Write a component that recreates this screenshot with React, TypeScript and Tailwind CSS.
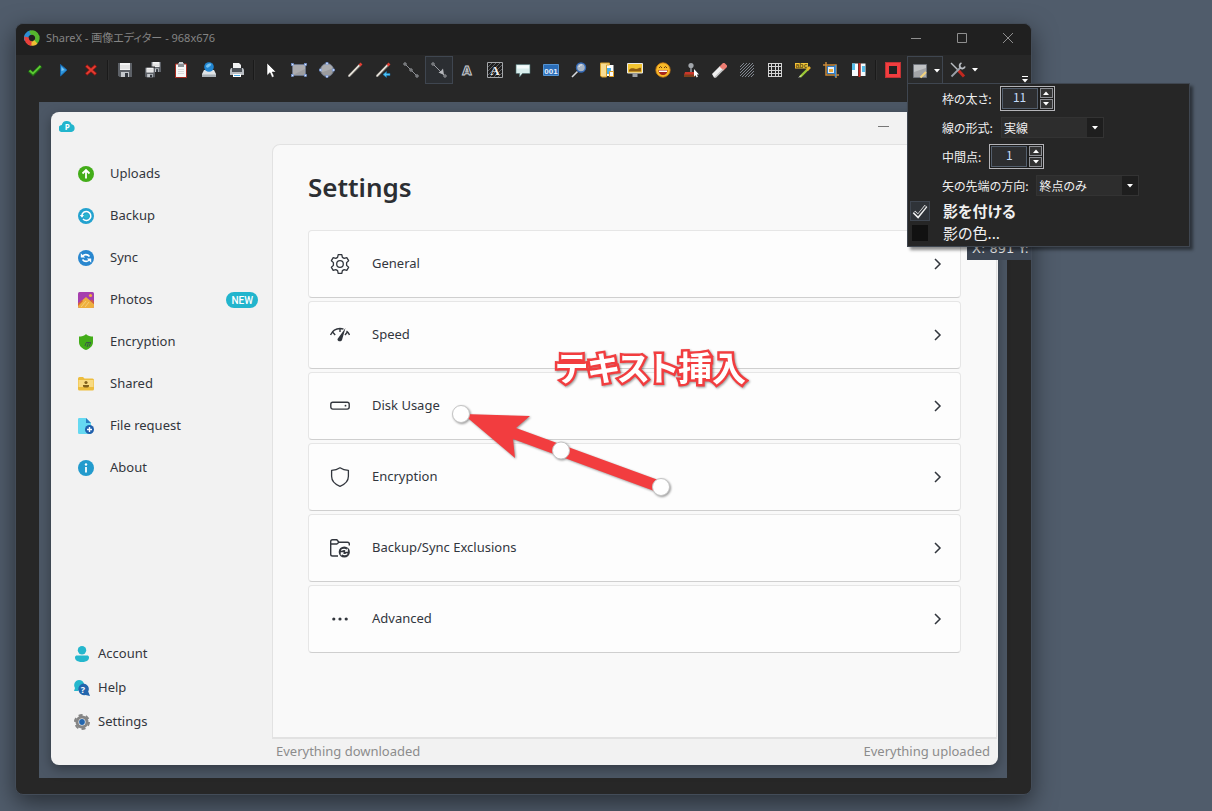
import { useState } from "react";
import type { ReactNode } from "react";

interface Tool {
  label: string;
  icon: ReactNode;
  active?: boolean;
}

function Icon({ children, size = 16, box = 16 }: { children: ReactNode; size?: number; box?: number }) {
  return (
    <svg width={size} height={size} viewBox={`0 0 ${box} ${box}`} fill="none" className="shrink-0" aria-hidden="true">
      {children}
    </svg>
  );
}

function Floppy({ x = 0, y = 0, s = 14 }: { x?: number; y?: number; s?: number }) {
  return (
    <svg x={x} y={y} width={s} height={s} viewBox="0 0 14 14">
      <path d="M0 0h14v14H1.500L0 12.500z" fill="#5d6167" />
      <path d="M2 0h10v7H2z" fill="#f4f4f4" />
      <path d="M2 3h10M2 5h10" stroke="#d2d2d2" />
      <path d="M3 9h8v5H3z" fill="#c4c8cc" />
      <path d="M7 10h3v4H7z" fill="#33383f" />
    </svg>
  );
}

const actionTools: Tool[] = [
  { label: "Apply", icon: <Icon><path d="M2 8.500l4 3.500 8-8" stroke="#1f6a14" strokeWidth="3.600" /><path d="M2.500 8.500L6 11.500 13.500 4" stroke="#5cc832" strokeWidth="1.800" /></Icon> },
  { label: "Continue", icon: <Icon><path d="M5.500 2.500L12 8l-6.500 6z" fill="#2f97dd" stroke="#1665a8" /><path d="M6.500 5l3 3-3 1z" fill="#7fc8f4" /></Icon> },
  { label: "Cancel", icon: <Icon><path d="M3 3.500l10 9M13 3.500l-10 9" stroke="#8d1713" strokeWidth="3.400" /><path d="M3.500 4l9 8M12.500 4l-9 8" stroke="#e43c31" strokeWidth="1.800" /></Icon> },
];

const fileTools: Tool[] = [
  { label: "Save", icon: <Icon><Floppy x={1} y={1} /></Icon> },
  { label: "Save as", icon: <Icon><Floppy x={6} y={0} s={10} /><path d="M-1 4.500h11v12H-1z" fill="#272727" /><Floppy x={0} y={5.500} s={10} /></Icon> },
  {
    label: "Copy",
    icon: (
      <Icon>
        <path d="M2.500 2h11v13.500h-11z" fill="#f7f7f7" stroke="#a62a20" />
        <path d="M5 1h6v4H5z" fill="#8b9095" />
        <path d="M6 0h4v2H6z" fill="#c9ced2" />
        <path d="M5 7.500h6M5 9.500h6M5 11.500h6" stroke="#d9d9d9" />
      </Icon>
    ),
  },
  {
    label: "Upload",
    icon: (
      <Icon>
        <path d="M3 8h10l2 4v3H1v-3z" fill="#dfe3e6" />
        <path d="M1 12.500h14V15H1z" fill="#a9b0b6" />
        <circle cx="8" cy="5" r="4.800" fill="#2186d2" />
        <path d="M5 4c1-2 4-3 5-2s-1 2-2 3-3 1-3-1z" fill="#76c3f1" />
      </Icon>
    ),
  },
  {
    label: "Print",
    icon: (
      <Icon>
        <path d="M4 1h6l2 2v4H4z" fill="#f2f2f2" />
        <path d="M2 6h12l1 2v5H1V8z" fill="#b9bdc2" />
        <path d="M3 6h10v4H3z" fill="#4b5056" />
        <path d="M4 12h8v3H4z" fill="#fff" />
        <path d="M5 13.500h6" stroke="#49a9e4" />
      </Icon>
    ),
  },
];

const dot = "#6f94d9";

const drawTools: Tool[] = [
  { label: "Select", icon: <Icon><path d="M4 1v12.500l3-2.800L9 15.500l2.200-1-2-4.500H13z" fill="#fff" stroke="#111" strokeWidth=".5" /></Icon> },
  {
    label: "Rectangle",
    icon: (
      <Icon>
        <path d="M1.500 2.500h13v11h-13z" fill="#9c9da0" stroke="#6a7385" />
        <path d="M2 13l12-6V3H2z" fill="#b9babc" opacity=".5" />
        {[[1.500, 2.500], [14.500, 2.500], [1.500, 13.500], [14.500, 13.500]].map(([x, y]) => (
          <rect key={`${x}-${y}`} x={x - 1} y={y - 1} width="2" height="2" fill="#dde6ff" stroke={dot} strokeWidth=".6" />
        ))}
      </Icon>
    ),
  },
  {
    label: "Ellipse",
    icon: (
      <Icon>
        <circle cx="8" cy="8" r="6.500" fill="#9a9b9e" stroke="#6a7385" />
        <path d="M2 10c3 0 8-2 12-4-1-2-3-4-6-4-4 0-7 4-6 8z" fill="#bcbdbf" opacity=".5" />
        {[[8, 1.500], [8, 14.500], [1.500, 8], [14.500, 8]].map(([x, y]) => (
          <rect key={`${x}-${y}`} x={x - 1} y={y - 1} width="2" height="2" fill="#dde6ff" stroke={dot} strokeWidth=".6" />
        ))}
      </Icon>
    ),
  },
  { label: "Freehand", icon: <Icon><path d="M2 14L13 3" stroke="#77736c" strokeWidth="2.600" /><path d="M1.500 14.500L12.500 3" stroke="#eeebe4" strokeWidth="1.500" /><path d="M12.500 3.500l2-2" stroke="#e23f34" strokeWidth="2.600" /></Icon> },
  {
    label: "Freehand arrow",
    icon: (
      <Icon>
        <path d="M2 14L13 3" stroke="#77736c" strokeWidth="2.600" />
        <path d="M1.500 14.500L12.500 3" stroke="#eeebe4" strokeWidth="1.500" />
        <path d="M12.500 3.500l2-2" stroke="#e23f34" strokeWidth="2.600" />
        <path d="M8 12.500l3.500-3v2H15v2h-3.500v2z" fill="#4cc3f5" stroke="#1679b8" strokeWidth=".5" />
      </Icon>
    ),
  },
  {
    label: "Line",
    icon: (
      <Icon>
        <path d="M1.500 1.500l13 13" stroke="#8d9096" />
        {[2, 8, 14].map((p) => <circle key={p} cx={p} cy={p} r="1.200" fill="#2b2b2b" stroke="#a0a3a8" />)}
      </Icon>
    ),
  },
  {
    label: "Arrow",
    active: true,
    icon: (
      <Icon>
        <path d="M2 2l11 11" stroke="#9a9da3" />
        <path d="M13 13l-1-6.500-2 2.500-2.500 1.500z" fill="#b5b7bb" />
        <circle cx="2" cy="2" r="1.200" fill="#2b2b2b" stroke="#a0a3a8" />
        <circle cx="14" cy="14" r="1.200" fill="#2b2b2b" stroke="#a0a3a8" />
      </Icon>
    ),
  },
  {
    label: "Text (outline)",
    icon: (
      <Icon>
        <text x="8" y="12.500" textAnchor="middle" fontFamily="DejaVu Sans" fontWeight="bold" fontSize="12" fill="#2f3338" stroke="#c9ccd1" strokeWidth="1">A</text>
      </Icon>
    ),
  },
  {
    label: "Text (background)",
    icon: (
      <Icon>
        <path d="M.5.500h15v15H.5z" fill="#1d1d1d" stroke="#a5a7aa" />
        <path d="M1 5l4-4M1 9l8-8M1 13l12-12M3 15L15 3M7 15l8-8M11 15l4-4" stroke="#5f6266" />
        <text x="8" y="12.500" textAnchor="middle" fontFamily="Liberation Serif" fontWeight="bold" fontSize="13" fill="#f2f2f2">A</text>
      </Icon>
    ),
  },
  { label: "Speech balloon", icon: <Icon><path d="M1 2.500h14v9H7.500L4.500 15v-3.500H1z" fill="#d9eeed" stroke="#4d6f70" strokeWidth=".6" /><path d="M2 3.500h12v3H2z" fill="#f4fbfb" /></Icon> },
  {
    label: "Step",
    icon: (
      <Icon>
        <path d="M.5 2.500h15v11H.5z" fill="#2a6db8" stroke="#5493d2" />
        <text x="8" y="11.500" textAnchor="middle" fontFamily="Liberation Sans" fontWeight="bold" fontSize="8" fill="#e5f0fb">001</text>
      </Icon>
    ),
  },
  { label: "Magnify", icon: <Icon><path d="M1 15l5.500-5.500" stroke="#d6d9dd" strokeWidth="1.600" /><circle cx="10" cy="5.500" r="4.500" fill="#a9b4c2" stroke="#3268b5" strokeWidth="1.400" /><path d="M8 5c0-1.500 2-2.500 3-2" stroke="#e8eef5" /></Icon> },
  {
    label: "Image from file",
    icon: (
      <Icon>
        <path d="M6 3h8.500v11H6z" fill="#fdfdfd" />
        <path d="M8 6h4v6H8z" fill="#49aee6" />
        <path d="M10.500 9.500h4v5h-4z" fill="#fff" stroke="#e3a329" />
        <path d="M1.500 1h9v2h-3v12H3l-1.500-1z" fill="#f7dc92" stroke="#d79e27" />
      </Icon>
    ),
  },
  {
    label: "Image from screen",
    icon: (
      <Icon>
        <path d="M.5 1.500h15v9.500H.5z" fill="#f3c431" stroke="#e7e7e7" />
        <path d="M2 8c3-3 5-1 7-1s3-2 5-1v3.500H2z" fill="#8d5b14" />
        <path d="M5.500 11.500h5V15h-5z" fill="#9da1a6" />
      </Icon>
    ),
  },
  {
    label: "Sticker",
    icon: (
      <Icon>
        <circle cx="8" cy="8" r="7.200" fill="#f8ba28" stroke="#c97913" strokeWidth=".8" />
        <path d="M3.500 8h9c0 3.500-2 5-4.500 5S3.500 11.500 3.500 8z" fill="#a7261d" />
        <path d="M4 8.500h8v1.500H4z" fill="#fff" />
        <path d="M4 6l1.500-1.500L7 6M9 6l1.500-1.500L12 6" stroke="#6c3a0c" />
      </Icon>
    ),
  },
  {
    label: "Cursor stamp",
    icon: (
      <Icon>
        <circle cx="8" cy="3.500" r="2.600" fill="#a2a6ab" />
        <path d="M8 6v5" stroke="#8c9095" strokeWidth="1.600" />
        <path d="M2 10h9l1 3H1z" fill="#c9362a" />
        <path d="M1 12.500h11V15H1z" fill="#7d3f1b" />
        <path d="M11 7v7.500l1.600-1.300 1 2.300 1.300-.7-1-2.300H16z" fill="#fff" />
      </Icon>
    ),
  },
  { label: "Smart eraser", icon: <Icon><path d="M1 12l8-8 4 3.500-8 8H3z" fill="#efefef" /><path d="M8.500 4.500L12 1h1.500L16 3.500V5l-3.500 3.500z" fill="#ee7d72" /><path d="M3 15.500h2l8-8-1-1-7.500 7.500z" fill="#bdbdbd" /></Icon> },
  {
    label: "Blur",
    icon: (
      <Icon>
        <path d="M1 5l4-4M1 8l7-7M1 11l10-10M1 14L14 1M3 15L15 3M6 15l9-9M9 15l6-6M12 15l3-3" stroke="#8b929c" strokeWidth=".9" />
      </Icon>
    ),
  },
  { label: "Pixelate", icon: <Icon><path d="M1.500 1.500h13v13h-13zM4.500 1v14M8 1v14M11.500 1v14M1 4.500h14M1 8h14M1 11.500h14" stroke="#d4d4d4" shapeRendering="crispEdges" /></Icon> },
  {
    label: "Highlight",
    icon: (
      <Icon>
        <path d="M0 1h13v5.500H0z" fill="#f3c83c" />
        <text x="6.500" y="6" textAnchor="middle" fontFamily="Liberation Sans" fontWeight="bold" fontSize="7" fill="#6b5110">abc</text>
        <path d="M5 15l8-8" stroke="#9cc936" strokeWidth="2.400" />
        <path d="M12 8l3-3" stroke="#e8b32d" strokeWidth="2.600" />
        <path d="M4 15.500l2-2" stroke="#f0f0f0" />
      </Icon>
    ),
  },
  {
    label: "Crop",
    icon: (
      <Icon>
        <path d="M4.500 4.500h7v7h-7z" fill="#e4f1fc" stroke="#2e79c3" />
        <path d="M6 7h4v3H6z" fill="#e9a93b" />
        <path d="M3 0v13h13M0 3h13v13" stroke="#c98a3a" strokeWidth="1.500" />
        <path d="M12.500 3v12" stroke="#3b8dd6" strokeWidth="1.500" />
      </Icon>
    ),
  },
  {
    label: "Cut out",
    icon: (
      <Icon>
        <path d="M1 1.500h6V14H1zM9.500 1.500h5V14h-5z" fill="#f4fafd" />
        <path d="M1 1.500h3V8H1zM11 4h3v6h-3z" fill="#54bce9" />
        <path d="M8.500 1v14" stroke="#c5271f" strokeWidth="2" />
      </Icon>
    ),
  },
];

const nav = [
  { label: "Uploads", icon: <Icon><circle cx="8" cy="8" r="8" fill="#43ad19" /><path d="M8 12.500V4M4.500 7.500L8 4l3.500 3.500" stroke="#fff" strokeWidth="1.800" /></Icon> },
  {
    label: "Backup",
    icon: (
      <Icon>
        <circle cx="8" cy="8" r="8" fill="#23a2cf" />
        <path d="M3.800 7.500A4.500 4.500 0 1 1 5 11" stroke="#fff" strokeWidth="1.500" />
        <path d="M1.800 7h4.400L4 9.800z" fill="#fff" />
        <circle cx="8.300" cy="8" r="2.500" fill="#2cb5cd" />
      </Icon>
    ),
  },
  {
    label: "Sync",
    icon: (
      <Icon>
        <circle cx="8" cy="8" r="8" fill="#2987cf" />
        <path d="M5 6c.8-1.600 4.500-2.200 6.500.5M11 10c-.8 1.600-4.500 2.200-6.500-.5" stroke="#fff" strokeWidth="1.600" />
        <path d="M2.800 3.300v4.200h4.400zM13.200 12.700V8.500H8.800z" fill="#fff" />
      </Icon>
    ),
  },
  {
    label: "Photos",
    badge: "NEW",
    icon: (
      <Icon>
        <rect width="16" height="16" rx="1.500" fill="#a63fae" />
        <circle cx="12.500" cy="3.500" r="1.600" fill="#f3b33c" />
        <path d="M0 12l8-7 8 7v2.500a1.500 1.500 0 0 1-1.500 1.500h-13A1.500 1.500 0 0 1 0 14.500z" fill="#eeb03f" />
        <path d="M0 11.500L4 8l1 1-5 5zM12 8.500l4 3.500v-2l-2-2.500z" fill="#d6603c" />
        <path d="M3 15l5-6M7 15l4-5" stroke="#f7cf76" />
      </Icon>
    ),
  },
  {
    label: "Encryption",
    icon: (
      <Icon>
        <path d="M8 0l1 1c2 1.200 4 1.500 6 1.500V8c0 4-3 6.500-7 8-4-1.500-7-4-7-8V2.500C3 2.500 5 2.200 7 1z" fill="#43ad19" />
        <path d="M7 12l1-3M9 13l1.500-4.500M11 12.500l1.500-3.500M8 8.500h5" stroke="#3c5a49" />
      </Icon>
    ),
  },
  {
    label: "Shared",
    icon: (
      <Icon>
        <path d="M0 2.500A1.500 1.500 0 0 1 1.500 1H5l1.500 1.500h8A1.500 1.500 0 0 1 16 4v9a1.500 1.500 0 0 1-1.500 1.500h-13A1.500 1.500 0 0 1 0 13z" fill="#edbd3e" />
        <path d="M.5 4h15v7H.5z" fill="#f8da82" />
        <circle cx="8" cy="6.500" r="1.600" fill="#80601b" />
        <path d="M5 9h6v1c0 1-1 1.500-3 1.500S5 11 5 10z" fill="#80601b" />
      </Icon>
    ),
  },
  {
    label: "File request",
    icon: (
      <Icon>
        <path d="M0 1.200A1.200 1.200 0 0 1 1.200 0H8l5 5v11H1.200A1.200 1.200 0 0 1 0 14.800z" fill="#66d9f1" />
        <path d="M8 0l5 5H8z" fill="#2a7fc0" />
        <circle cx="11.500" cy="11.500" r="4.500" fill="#1f5fac" />
        <path d="M11.500 9v5M9 11.500h5" stroke="#fff" strokeWidth="1.400" />
      </Icon>
    ),
  },
  {
    label: "About",
    icon: (
      <Icon>
        <circle cx="8" cy="8" r="8" fill="#239bcd" />
        <path d="M8 7v5.500" stroke="#fff" strokeWidth="1.800" />
        <circle cx="8" cy="4.500" r="1.200" fill="#fff" />
      </Icon>
    ),
  },
];

const footerNav = [
  { label: "Account", icon: <Icon><circle cx="8" cy="4.200" r="4.200" fill="#25b7cd" /><path d="M1 11.500c0-1.500 1-2 2-2h10c1 0 2 .5 2 2 0 3-3 4.500-7 4.500s-7-1.500-7-4.500z" fill="#25b7cd" /></Icon> },
  {
    label: "Help",
    icon: (
      <Icon>
        <path d="M5 0a5.200 5.200 0 0 1 5 4L4 11H0l1-3a5.200 5.200 0 0 1 4-8z" fill="#25b7cd" />
        <path d="M9 3.500a5.500 5.500 0 0 1 5.200 8L16 16l-4.500-1A5.700 5.700 0 1 1 9 3.500z" fill="#2366ae" />
        <text x="9" y="12.500" textAnchor="middle" fontFamily="Open Sans" fontWeight="bold" fontSize="9" fill="#fff">?</text>
      </Icon>
    ),
  },
  {
    label: "Settings",
    icon: (
      <Icon>
        <circle cx="8" cy="8" r="5" fill="#fff" stroke="#858585" strokeWidth="3" />
        <circle cx="8" cy="8" r="7" stroke="#858585" strokeWidth="2" strokeDasharray="4 3.330" />
        <circle cx="8" cy="8" r="2.900" fill="#2366ae" />
      </Icon>
    ),
  },
];

const ink = "#32363d";

const settings = [
  {
    label: "General",
    icon: (
      <Icon size={20} box={20}>
        <path
          d="M8.200.700h3.600l.6 2.700 1.800 1 2.600-.8 1.800 3.100-2 1.900v2.800l2 1.900-1.800 3.100-2.600-.8-1.800 1-.6 2.700H8.200l-.6-2.700-1.800-1-2.600.8-1.800-3.100 2-1.900V8.600l-2-1.900 1.800-3.100 2.600.8 1.800-1z"
          stroke={ink}
          strokeWidth="1.300"
          strokeLinejoin="round"
        />
        <circle cx="10" cy="10" r="3.300" stroke={ink} strokeWidth="1.300" />
      </Icon>
    ),
  },
  {
    label: "Speed",
    icon: (
      <Icon size={20} box={20}>
        <path d="M.5 10C2.500 5.500 6 3.500 10 3.500c1.300 0 2.500.2 3.500.6M16.500 6c1.200.9 2.300 2.200 3 4M3 7.500l2.200 2.500M10 3.500v3.500M17 7.500L15 10" stroke={ink} strokeWidth="1.400" />
        <path d="M15.500 3L12 15c-.6 2.200-5 1.600-4.500-1z" fill={ink} />
      </Icon>
    ),
  },
  { label: "Disk Usage", icon: <Icon size={20} box={20}><rect x=".8" y="6.300" width="18.400" height="6.800" rx="2" stroke={ink} strokeWidth="1.400" /><circle cx="15.500" cy="9.700" r=".9" fill={ink} /></Icon> },
  { label: "Encryption", icon: <Icon size={20} box={20}><path d="M10 .800c2.500 1.800 5.300 2.500 8.400 2.500v6c0 5-3.300 8-8.400 10-5.100-2-8.400-5-8.400-10v-6C4.700 3.300 7.500 2.600 10 .800z" stroke={ink} strokeWidth="1.300" strokeLinejoin="round" /></Icon> },
  {
    label: "Backup/Sync Exclusions",
    icon: (
      <Icon size={20} box={20}>
        <path d="M8 18H2.500A1.800 1.800 0 0 1 .7 16.200V3.500c0-1 .8-1.800 1.800-1.800h4.300l2.200 2.600h8.500c1 0 1.800.8 1.800 1.800v1.500M.7 6h6.100L9 4.300" stroke={ink} strokeWidth="1.400" />
        <circle cx="14.300" cy="14" r="5.600" fill={ink} />
        <path d="M11.300 12.500c1.500-1.500 4.500-1.500 5.500.3M17.300 15.500c-1.500 1.500-4.500 1.500-5.500-.3M17.300 10.800v2.300h-2.300M11.300 17.200v-2.300h2.300" stroke="#fff" strokeWidth="1.100" />
      </Icon>
    ),
  },
  { label: "Advanced", icon: <Icon size={20} box={20}><circle cx="3.800" cy="10" r="1.600" fill={ink} /><circle cx="10" cy="10" r="1.600" fill={ink} /><circle cx="16.200" cy="10" r="1.600" fill={ink} /></Icon> },
];

function ToolButton({ tool }: { tool: Tool }) {
  return (
    <button
      aria-label={tool.label}
      className={`flex size-7 items-center justify-center border ${
        tool.active ? "border-[#3f4650] bg-[#2b2e32]" : "border-transparent"
      }`}
    >
      {tool.icon}
    </button>
  );
}

function Separator() {
  return <span className="mx-[2px] h-5 w-[2px] border-l border-[#1a1a1a] bg-[#303030]" />;
}

function Caret({ up = false }: { up?: boolean }) {
  return (
    <svg width="6" height="4" viewBox="0 0 6 4" aria-hidden="true">
      <path d={up ? "M0 4h6L3 .500z" : "M0 0h6L3 3.500z"} fill="#fff" />
    </svg>
  );
}

function Stepper({ id, label, initial }: { id: string; label: string; initial: number }) {
  const [value, setValue] = useState(initial);

  return (
    <div className="flex h-[29px] items-center gap-2">
      <label htmlFor={id}>{label}</label>
      <div className="flex h-[25px] w-[55px] gap-[2px] border border-[#b4b4b8] bg-[#1c1c1c] p-px">
        <input
          id={id}
          type="number"
          value={value}
          onChange={(e) => setValue(Number(e.target.value))}
          className="w-9 [appearance:textfield] border border-[#55606e] bg-[#2d2e30] pb-[3px] text-center text-[#c5dcfa] outline-none [&::-webkit-inner-spin-button]:appearance-none"
        />
        <div className="flex flex-1 flex-col gap-px">
          <button aria-label={`${label} +`} onClick={() => setValue(value + 1)} className="flex flex-1 items-center justify-center border border-[#8d8f94] bg-[#333]">
            <Caret up />
          </button>
          <button aria-label={`${label} -`} onClick={() => setValue(value - 1)} className="flex flex-1 items-center justify-center border border-[#8d8f94] bg-[#333]">
            <Caret />
          </button>
        </div>
      </div>
    </div>
  );
}

function Picker({ id, label, options }: { id: string; label: string; options: string[] }) {
  return (
    <div className="flex h-[29px] items-center gap-2">
      <label htmlFor={id}>{label}</label>
      <div className="relative h-[21px] w-[103px]">
        <select id={id} className="h-full w-full appearance-none border border-[#333] bg-[#2d2d2d] pl-[2px] text-[#f0f0f0] outline-none">
          {options.map((o) => (
            <option key={o}>{o}</option>
          ))}
        </select>
        <span className="pointer-events-none absolute inset-y-px right-px flex w-4 items-center justify-center bg-[#1e1e1e]">
          <Caret />
        </span>
      </div>
    </div>
  );
}

function OptionsMenu() {
  const [shadow, setShadow] = useState(true);

  return (
    <div className="absolute top-[26px] -left-px z-20 w-[283px] border border-[#3f4650] bg-[#262626] pb-[2px] font-['Noto_Sans_CJK_JP',sans-serif] text-xs text-[#f0f0f0] shadow-[3px_3px_3px_rgba(0,0,0,0.45)] [font-feature-settings:'palt']">
      <div className="pl-[34px]">
        <Stepper id="border-size" label="枠の太さ:" initial={11} />
        <Picker id="line-style" label="線の形式:" options={["実線", "破線", "点線"]} />
        <Stepper id="midpoints" label="中間点:" initial={1} />
        <Picker id="arrow-heads" label="矢の先端の方向:" options={["終点のみ", "始点のみ", "両端"]} />
      </div>
      <label className="flex h-[22px] items-center gap-[13px] pl-[2px] text-[15px] font-bold">
        <span className="relative flex size-5 items-center justify-center border border-[#3f4650] bg-[#2f3338]">
          <input type="checkbox" checked={shadow} onChange={(e) => setShadow(e.target.checked)} className="absolute inset-0 appearance-none" />
          {shadow && (
            <Icon>
              <path d="M2 9l4 4 8-10" stroke="#f2f2f2" strokeWidth="3.600" />
              <path d="M2.500 9L6 12.200 13.500 3.200" stroke="#2f3338" strokeWidth="1.400" />
            </Icon>
          )}
        </span>
        影を付ける
      </label>
      <button className="flex h-[22px] items-center gap-[15px] pl-1 text-[15px]">
        <span className="size-4 bg-[#111]" />
        影の色...
      </button>
    </div>
  );
}

function TitleBar() {
  return (
    <div className="flex h-[31px] items-center rounded-t-lg bg-[#202020] pb-[3px] pl-2 text-xs text-[#848484]">
      <Icon>
        <path d="M2.500 10A5.500 5.500 0 0 1 7 2.600" stroke="#2d8fd5" strokeWidth="4.500" />
        <path d="M6 3A5.500 5.500 0 0 1 13.400 7" stroke="#55b82e" strokeWidth="4.500" />
        <path d="M13 6A5.500 5.500 0 0 1 9 13.400" stroke="#55b82e" strokeWidth="4.500" />
        <path d="M12 12A5.500 5.500 0 0 1 5 12.500" stroke="#f1bd35" strokeWidth="4.500" />
        <path d="M7.500 13.400A5.500 5.500 0 0 1 2.600 7" stroke="#e8403b" strokeWidth="4.500" />
      </Icon>
      <h1 className="ml-[6px] flex-1 text-[11px] [font-feature-settings:'palt']">ShareX - 画像エディター - 968x676</h1>
      <button aria-label="Minimize" className="flex h-full w-[46px] items-center justify-center">
        <Icon size={12} box={12}><path d="M1 6.500h10" stroke="#8f8f8f" /></Icon>
      </button>
      <button aria-label="Maximize" className="flex h-full w-[46px] items-center justify-center">
        <Icon size={12} box={12}><path d="M1.500 1.500h9v9h-9z" stroke="#8f8f8f" /></Icon>
      </button>
      <button aria-label="Close" className="flex h-full w-[46px] items-center justify-center">
        <Icon size={12} box={12}><path d="M1 1l10 10M11 1L1 11" stroke="#8f8f8f" /></Icon>
      </button>
    </div>
  );
}

function Toolbar() {
  return (
    <div role="toolbar" className="flex h-[47px] items-start pt-px pl-[5px]">
      <div className="flex items-center">
        {actionTools.map((t) => <ToolButton key={t.label} tool={t} />)}
        <Separator />
        {fileTools.map((t) => <ToolButton key={t.label} tool={t} />)}
        <Separator />
        {drawTools.map((t) => <ToolButton key={t.label} tool={t} />)}
        <Separator />
        <button aria-label="Border color" className="flex size-7 items-center justify-center">
          <span className="size-[14px] border-[3px] border-[#f23d3f] bg-[#222] outline outline-[#c03234]" />
        </button>
        <div className="relative h-7 w-9 border border-b-0 border-[#3f4650] bg-[#2a2b2c]">
          <button aria-label="Shape options" className="flex h-full w-full items-center justify-center gap-[6px] pl-px">
            <Icon>
              <path d="M1.500 1.500h13v13h-13z" fill="#a3a5a8" stroke="#6e737b" />
              <path d="M2 2h12v3L2 9z" fill="#c0c2c4" />
              <path d="M8.500 14.500l5.500-5.500" stroke="#f1d27c" strokeWidth="2" />
            </Icon>
            <Caret />
          </button>
          <OptionsMenu />
        </div>
        <button aria-label="Tools" className="flex h-7 w-[42px] items-center justify-center gap-[6px]">
          <Icon>
            <path d="M1 1l8 8" stroke="#b9bdc2" strokeWidth="1.400" />
            <path d="M8.500 8.500l5.500 6" stroke="#c3281f" strokeWidth="3" />
            <path d="M1.500 14.500L11 5" stroke="#9aa1a9" strokeWidth="1.800" />
            <path d="M11.500 1c-2 .8-2.300 3-1.300 4.500S14 7 15 4.500" stroke="#b9bdc2" strokeWidth="1.800" />
          </Icon>
          <Caret />
        </button>
      </div>
      <button aria-label="More tools" className="mt-5 mr-[3px] ml-auto flex w-[7px] flex-col items-center gap-[2px]">
        <span className="h-px w-[6px] bg-white" />
        <Caret />
      </button>
    </div>
  );
}

function BackupApp() {
  return (
    <div className="grid grid-cols-[221px_1fr] grid-rows-[32px_1fr_26px] overflow-hidden rounded-lg bg-[#f2f2f2] text-[13px] text-[#32363d] shadow-[0_4px_12px_rgba(0,0,0,0.35)]">
      <div className="col-span-2 flex items-center justify-between pl-2">
        <svg width="16" height="12" viewBox="0 0 16 12" className="mb-1" aria-hidden="true">
          <path d="M3.500 12A3.500 3.500 0 0 1 2.800 5 5.200 5.200 0 0 1 12.600 4.200 4 4 0 0 1 12.400 12z" fill="#22b5cd" />
          <text x="8.300" y="9.500" textAnchor="middle" fontFamily="Open Sans" fontWeight="bold" fontSize="8" fill="#fff">P</text>
        </svg>
        <button aria-label="Minimize" className="mr-[108px] mb-1 flex h-7 w-3 items-center">
          <span className="h-px w-[11px] bg-[#777]" />
        </button>
      </div>

      <div className="flex flex-col justify-between pt-[9px]">
        <nav>
          {nav.map((item) => (
            <a key={item.label} href="#" className="flex h-[42px] items-center gap-4 pr-[14px] pl-[27px]">
              {item.icon}
              {item.label}
              {item.badge && (
                <span className="ml-auto flex h-4 items-center rounded-full bg-[#22b5cd] px-[5px] font-['Roboto',sans-serif] text-[10px] font-medium text-white">{item.badge}</span>
              )}
            </a>
          ))}
        </nav>
        <nav>
          {footerNav.map((item) => (
            <a key={item.label} href="#" className="flex h-[34px] items-center gap-2 pl-[23px]">
              {item.icon}
              {item.label}
            </a>
          ))}
        </nav>
      </div>

      <main className="mr-px rounded-tl-lg border border-b-2 border-[#e2e2e2] bg-[#f9f9f9] px-[35px] pb-[84px]">
        <h2 className="flex h-[85px] items-center text-[26px] font-semibold text-[#2c2f33]">Settings</h2>
        <div className="flex flex-col gap-[3px]">
          {settings.map((row) => (
            <button
              key={row.label}
              className="flex h-[68px] items-center gap-[22px] rounded border border-[#e6e6e6] border-b-[#cfcfcf] bg-[#fdfdfd] pr-4 pl-[21px]"
            >
              {row.icon}
              {row.label}
              <svg width="12" height="12" viewBox="0 0 12 12" fill="none" className="ml-auto" aria-hidden="true">
                <path d="M3 1l5 5-5 5" stroke={ink} strokeWidth="1.500" />
              </svg>
            </button>
          ))}
        </div>
      </main>

      <div className="col-start-2 flex items-center justify-between pr-2 pl-1 text-[#8c8c8c]">
        <span>Everything downloaded</span>
        <span>Everything uploaded</span>
      </div>
    </div>
  );
}

export default function App() {
  return (
    <div className="min-h-screen overflow-hidden bg-[#505c6b] pt-[23px] pr-[180px] pb-4 pl-[15px] font-['Noto_Sans','Noto_Sans_CJK_JP',sans-serif]">
      <div className="rounded-lg border border-[#434c58] bg-[#272727] shadow-[0_8px_24px_rgba(0,0,0,0.5)]">
        <TitleBar />
        <Toolbar />

        {/* Captured image with the drawn annotations on top */}
        <div className="relative mr-6 mb-4 ml-[23px] bg-[#4c5765] pt-[10px] pr-[9px] pb-[13px] pl-3">
          <BackupApp />

          <svg width="220" height="100" viewBox="0 0 220 100" fill="none" className="absolute top-[300px] left-[412px] drop-shadow-[1px_1px_1px_rgba(0,0,0,0.4)]" aria-hidden="true">
            <path d="M12 12l67 2-14 12 145 53-4 11-144-53 2 19z" fill="#f23d3f" />
            <circle cx="10" cy="12" r="8.500" fill="#fff" stroke="#c4c4c4" />
            <circle cx="110" cy="48.500" r="8.500" fill="#fff" stroke="#c4c4c4" />
            <circle cx="210" cy="85" r="8.500" fill="#fff" stroke="#c4c4c4" />
          </svg>
          <p className="absolute top-[242px] left-[517px] text-[34px] leading-[48px] font-bold whitespace-nowrap text-white drop-shadow-[1px_1px_1px_rgba(0,0,0,0.4)] [font-feature-settings:'palt'] [-webkit-text-stroke:5px_#f23d3f] [paint-order:stroke_fill]">
            テキスト挿入
          </p>
          <div className="absolute top-[138px] -right-6 flex h-5 w-16 items-center overflow-hidden bg-[#3d4653] pb-[2px] pl-[5px] font-['DejaVu_Sans',sans-serif] text-[13px] whitespace-nowrap text-[#e6e6e6]">
            X: 891 Y:
          </div>
        </div>
      </div>
    </div>
  );
}
